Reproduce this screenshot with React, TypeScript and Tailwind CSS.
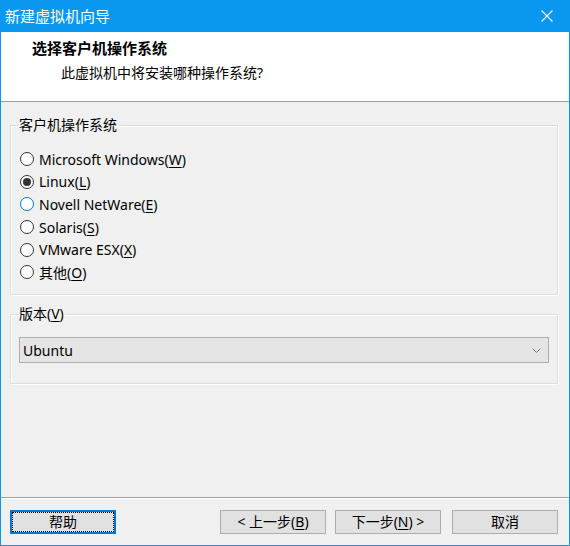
import React from 'react';

const font = { fontFamily: '"Noto Sans", "Noto Sans CJK SC", sans-serif' };

function Radio({ label, keyChar, checked, hover }: { label: string; keyChar: string; checked?: boolean; hover?: boolean }) {
  return (
    <div className="flex h-[22.6px] items-center">
      <span
        className={`flex h-[14px] w-[14px] items-center justify-center rounded-full border bg-white ${hover ? 'border-[#0078d7]' : 'border-[#333]'}`}
      >
        {checked && <span className="h-[8px] w-[8px] rounded-full bg-[#333]" />}
      </span>
      <span className="ml-[5px] text-[14px] text-black">
        {label}(<u className="underline-offset-2">{keyChar}</u>)
      </span>
    </div>
  );
}

function Button({ children, focused }: { children: React.ReactNode; focused?: boolean }) {
  return (
    <button
      type="button"
      className={`flex h-[24px] w-[106px] items-center justify-center border bg-[#e1e1e1] text-[14px] text-black ${focused ? 'border-[#0078d7] shadow-[inset_0_0_0_1px_#0078d7]' : 'border-[#adadad]'}`}
    >
      {focused ? (
        <span className="flex h-[18px] w-[100px] items-center justify-center outline-1 outline-dotted outline-[#000]">
          {children}
        </span>
      ) : (
        children
      )}
    </button>
  );
}

export default function App() {
  return (
    <div className="flex h-[546px] w-[570px] flex-col bg-[#0a97f0]" style={font}>
      <div className="flex h-[32px] shrink-0 items-center justify-between">
        <span className="pl-[5px] text-[15px] text-white">新建虚拟机向导</span>
        <span className="flex h-[32px] w-[46px] items-center justify-center">
          <svg width="12" height="12" viewBox="0 0 12 12" stroke="white" strokeWidth="1.1">
            <path d="M0.5 0.5l11 11M11.5 0.5l-11 11" />
          </svg>
        </span>
      </div>

      <div className="mx-px mb-px flex flex-1 flex-col bg-[#f0f0f0]">
        <div className="h-[70px] shrink-0 border-b border-[#a0a0a0] bg-white">
          <div className="pl-[31px] pt-[6px] text-[15px] font-bold leading-[21px] text-black">选择客户机操作系统</div>
          <div className="pl-[60px] pt-[4px] text-[14px] leading-[20px] text-black">此虚拟机中将安装哪种操作系统?</div>
        </div>

        <div className="flex flex-1 flex-col pl-[9px] pr-[11px] pt-[13px]">
          <fieldset className="h-[180px] border border-[#dcdcdc] px-[9px] shadow-[inset_1px_1px_0_#fff,1px_1px_0_#fff]">
            <legend className="ml-[-2px] px-[1px] text-[14px] leading-[20px] text-black">客户机操作系统</legend>
            <div className="pt-[13px]">
              <Radio label="Microsoft Windows" keyChar="W" />
              <Radio label="Linux" keyChar="L" checked />
              <Radio label="Novell NetWare" keyChar="E" hover />
              <Radio label="Solaris" keyChar="S" />
              <Radio label="VMware ESX" keyChar="X" />
              <Radio label="其他" keyChar="O" />
            </div>
          </fieldset>

          <fieldset className="mt-[9px] h-[80px] border border-[#dcdcdc] px-[8px] shadow-[inset_1px_1px_0_#fff,1px_1px_0_#fff]">
            <legend className="ml-[-1px] px-[1px] text-[14px] leading-[20px] text-black">
              版本(<u className="underline-offset-2">V</u>)
            </legend>
            <div className="mt-[13px] flex h-[26px] items-center justify-between border border-[#adadad] bg-[#e5e5e5] pl-[3px] pr-[7px]">
              <span className="text-[14px] text-black">Ubuntu</span>
              <svg width="9" height="5" viewBox="0 0 9 5" fill="none" stroke="#777" strokeWidth="1">
                <path d="M0.5 0.5l4 4l4-4" />
              </svg>
            </div>
          </fieldset>
        </div>

        <div className="flex h-[48px] shrink-0 items-center border-t border-[#a0a0a0] pl-[9px] pr-[11px] shadow-[inset_0_1px_0_#fff]">
          <Button focused>帮助</Button>
          <div className="ml-auto flex gap-[9px]">
            <Button>
              &lt; 上一步(<u className="underline-offset-2">B</u>)
            </Button>
            <Button>
              下一步(<u className="underline-offset-2">N</u>) &gt;
            </Button>
          </div>
          <div className="ml-[11px]">
            <Button>取消</Button>
          </div>
        </div>
      </div>
    </div>
  );
}
